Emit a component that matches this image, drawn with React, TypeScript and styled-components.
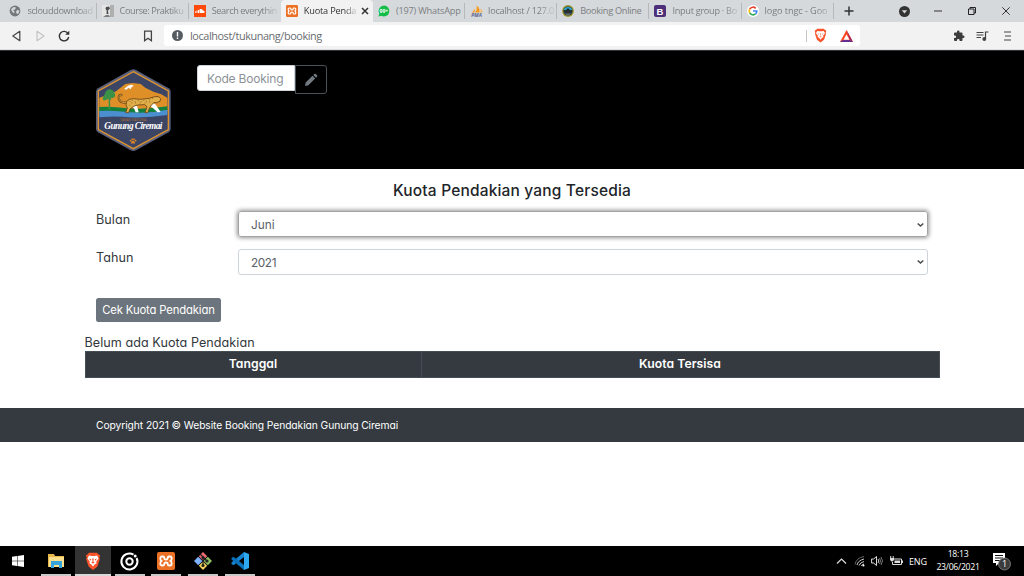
import React from "react";
import styled, { createGlobalStyle, css } from "styled-components";

const GlobalStyle = createGlobalStyle`
  * { box-sizing: border-box; }
  html, body { margin: 0; padding: 0; background: #fff; }
  body { width: 1024px; height: 576px; overflow: hidden; }
`;

const ui = `"Open Sans", "Noto Sans", sans-serif`;
const brand = `Inter, "Liberation Sans", sans-serif`;

const Screen = styled.div`
  width: 1024px;
  height: 576px;
  display: flex;
  flex-direction: column;
  background: #fff;
  svg { display: block; flex: none; overflow: visible; }
`;

/* Browser window */
const TabStrip = styled.div`
  height: 22px;
  flex: none;
  display: flex;
  align-items: stretch;
  padding-left: 4.4px;
  background: #d5d9dc;
  font: 9.2px/22px ${ui};
`;
const Tab = styled.div<{ $active?: boolean; $divider?: boolean }>`
  width: 92.15px;
  flex: none;
  display: flex;
  align-items: center;
  padding: 0 2px 0 5px;
  color: #7b7e81;
  ${(p) => p.$divider && css`background: linear-gradient(#b5b9bc, #b5b9bc) right center / 1px 16px no-repeat;`}
  ${(p) => p.$active && css`background: #f2f2f2; color: #333; border-radius: 4px 4px 0 0;`}
`;
const Favicon = styled.span`
  width: 12px;
  height: 12px;
  margin-right: 6px;
  flex: none;
`;
const TabTitle = styled.span<{ $ls?: number; $fade?: boolean }>`
  flex: 1;
  min-width: 0;
  white-space: nowrap;
  letter-spacing: ${(p) => p.$ls ?? -0.25}px;
  ${(p) => p.$fade && css`mask-image: linear-gradient(90deg, #000 76%, rgba(0, 0, 0, 0.25) 96%);`}
`;
const WindowControls = styled.div`
  flex: 1;
  display: flex;
  align-items: center;
  gap: 26px;
  padding-left: 10.4px;
  > :first-child { margin-right: 19px; }
  > :nth-child(2) { margin-right: -2px; }
`;
const Toolbar = styled.div`
  height: 28px;
  flex: none;
  display: flex;
  align-items: center;
  padding-left: 10px;
  background: #f2f2f2;
  border-bottom: 1px solid #dcdcdc;
`;
const NavIcons = styled.div`
  width: 154px;
  display: flex;
  align-items: center;
  gap: 12px;
  > :last-child { margin-left: 60px; }
`;
const AddressBar = styled.div`
  width: 696px;
  height: 21px;
  display: flex;
  align-items: center;
  padding: 0 7px 0 8px;
  border-radius: 3px;
  background: #fff;
  gap: 7px;
`;
const Url = styled.span`
  flex: 1;
  font: 10.9px/20px ${ui};
  letter-spacing: -0.42px;
  color: #6a6d70;
`;
const Rule = styled.i`
  width: 1px;
  height: 12px;
  background: #c4c4c4;
`;
const Extensions = styled.div`
  flex: 1;
  display: flex;
  justify-content: flex-end;
  align-items: center;
  gap: 11px;
  padding-right: 10px;
`;

/* Website */
const SiteHeader = styled.header`
  height: 119px;
  flex: none;
  display: flex;
  align-items: flex-start;
  padding: 14px 0 0 96px;
  background: #000;
  border-top: 1px solid #303438;
`;
const LogoBox = styled.div`
  width: 101px;
  padding-top: 4px;
`;
const BookingInput = styled.input`
  width: 98px;
  height: 26px;
  margin: 0;
  padding: 0 0 0 9px;
  border: 1px solid #ced4da;
  border-radius: 3px 0 0 3px;
  outline: 0;
  background: #fff;
  font: 400 12px ${brand};
  font-feature-settings: "cv11";
  letter-spacing: -0.2px;
  &::placeholder { color: #8d9297; opacity: 1; }
`;
const EditButton = styled.button`
  width: 32px;
  height: 29px;
  padding: 0;
  display: grid;
  place-items: center;
  background: #000;
  border: 1px solid #4b5258;
  border-radius: 0 3px 3px 0;
`;
const Main = styled.main`
  height: 239px;
  flex: none;
  width: 855px;
  margin: 0 auto;
  font-family: ${brand};
  font-feature-settings: "cv11";
  color: #212529;
`;
const Form = styled.form`
  padding: 11px 11.5px 0;
  height: 163px;
`;
const Title = styled.h1`
  margin: 0 0 10px;
  font: 500 15.5px/21px ${brand};
  letter-spacing: 0.17px;
  text-align: center;
`;
const Field = styled.div`
  display: flex;
  height: 26px;
  margin-bottom: 11.5px;
`;
const Label = styled.label`
  width: 142px;
  font-size: 12.6px;
  line-height: 18px;
  letter-spacing: 0.05px;
  color: #33383c;
`;
const Select = styled.div<{ $focus?: boolean }>`
  flex: 1;
  display: flex;
  align-items: center;
  justify-content: space-between;
  padding: 2px 3px 0 12px;
  border: 1px solid ${(p) => (p.$focus ? "#a4a4a4" : "#ced4da")};
  border-radius: 3px;
  font-size: 11.8px;
  letter-spacing: -0.4px;
  color: #5a6168;
  ${(p) => p.$focus && css`letter-spacing: 0; box-shadow: 0 0 4px 1px rgba(0, 0, 0, 0.42);`}
`;
const CheckButton = styled.button`
  display: block;
  width: 125px;
  height: 24px;
  margin-top: 23px;
  padding: 0;
  border: 0;
  border-radius: 2.5px;
  background: #6c757d;
  color: #fff;
  font: 400 11.3px/24px ${brand};
  font-feature-settings: "cv11";
  letter-spacing: -0.15px;
`;
const Message = styled.p`
  margin: 0;
  height: 19px;
  font-size: 12.6px;
  line-height: 21px;
  letter-spacing: 0.05px;
  color: #33383c;
`;
const QuotaHead = styled.div`
  display: grid;
  grid-template-columns: 335px 1fr;
  height: 27px;
  background: #343a40;
  border: 1px solid #454d55;
`;
const HeadCell = styled.div`
  text-align: center;
  font-weight: 600;
  font-size: 12.2px;
  line-height: 24px;
  letter-spacing: 0.05px;
  color: #fff;
  & + & { border-left: 1px solid #454d55; }
`;
const Footer = styled.footer`
  height: 34px;
  flex: none;
  padding-left: 96px;
  background: #343a40;
  font: 400 10.3px/34px ${brand};
  font-feature-settings: "cv11";
  letter-spacing: -0.09px;
  color: #fff;
`;
const Blank = styled.div`
  flex: 1;
`;

/* Desktop taskbar */
const Taskbar = styled.div`
  height: 30px;
  flex: none;
  display: flex;
  background: #000;
  color: #fff;
  font-family: ${ui};
`;
const Apps = styled.div`
  display: grid;
  grid-template-columns: 38px repeat(6, 36.7px);
  > :first-child { padding-right: 2px; }
`;
const AppSlot = styled.div<{ $state?: "open" | "active" }>`
  display: grid;
  place-items: center;
  ${(p) => p.$state && css`background: linear-gradient(#c9c9c9, #c9c9c9) center bottom / 30px 2px no-repeat;`}
  ${(p) => p.$state === "active" && css`background: linear-gradient(#d9d9d9, #d9d9d9) center bottom / 100% 2px no-repeat, #333;`}
`;
const Tray = styled.div`
  flex: 1;
  display: flex;
  justify-content: flex-end;
  align-items: center;
  gap: 6px;
  padding-right: 12px;
`;
const Lang = styled.span`
  width: 20px;
  font-size: 9px;
  letter-spacing: -0.2px;
`;
const Clock = styled.div`
  width: 46px;
  text-align: center;
  font-size: 8.7px;
  line-height: 13px;
  letter-spacing: -0.3px;
  white-space: nowrap;
`;

const Xampp = ({ s }: { s: number }) => (
  <svg width={s} height={s} viewBox="0 0 18 18">
    <rect width="18" height="18" rx="2" fill="#ec7124" />
    <path d="M5 4.500H6Q7.300 4.500 7.300 6 7.300 7.500 9 7.500 10.700 7.500 10.700 6 10.700 4.500 12 4.500H13Q14.700 4.500 14.700 6.500 14.700 8.300 13.500 9 14.700 9.700 14.700 11.500 14.700 13.500 13 13.500H12Q10.700 13.500 10.700 12 10.700 10.500 9 10.500 7.300 10.500 7.300 12 7.300 13.500 6 13.500H5Q3.300 13.500 3.300 11.500 3.300 9.700 4.500 9 3.300 8.300 3.300 6.500 3.300 4.500 5 4.500z" fill="none" stroke="#fff" strokeWidth="1.800" />
  </svg>
);
const Brave = ({ s, pale }: { s: number; pale?: boolean }) => (
  <svg width={s} height={s * 1.15} viewBox="0 0 20 23">
    <path d="M5 1h10l2 2 2 1-1 3 .5 2-3 9-5.500 4.500L4.500 18l-3-9L2 7 1 4l2-1z" fill="#fb542b" />
    <path d="M5 4.500l3 .5h4l3-.5 2 3.500-3 4 .5 2-2.500 1.500L10 18l-2-2.500L5.500 14l.5-2-3-4z" fill="#fff" />
    <path d="M5 8l3 1-1 2zM15 8l-3 1 1 2zM9 8h2l-.5 4 1.500 1.500-2 1-2-1L9.500 12z" fill={pale ? "#f9a58f" : "#fb542b"} />
  </svg>
);

const Globe = () => (
  <svg width="12" height="12" viewBox="0 0 12 12">
    <circle cx="6" cy="6" r="5.400" fill="#74787b" />
    <path d="M2 4.500L4.500 2l2.500.5-1 2-2 .5 1.500 1.500L5 8.500l-2-2zM8 5l2.500.5-1 3-1.500.5-1-2z" fill="#d5d9dc" />
  </svg>
);
const CourseIcon = () => (
  <svg width="12" height="12" viewBox="0 0 12 12">
    <rect width="12" height="12" fill="#e5e5e3" />
    <path d="M8 0h4v12H8z" fill="#aeb0b0" />
    <path d="M4 2l3-.5 1 2-2 2 .5 3.500H4.500l.2-3.500L3.500 4z" fill="#4a4e50" />
    <path d="M1 12l3-2h3l1 2z" fill="#7b7e80" />
  </svg>
);
const SoundCloud = () => (
  <svg width="12" height="12" viewBox="0 0 12 12">
    <rect width="12" height="12" fill="#ff4a0a" />
    <path d="M5.500 8V4.300c2-1 3.300.2 3.500 1.500C11.200 5.600 11.200 8 9.500 8zM4 5h1v3H4zM2.500 5.500h1V8h-1zM1.200 6.200h.8v1.500h-.8z" fill="#fff" />
  </svg>
);
const WhatsApp = () => (
  <svg width="12" height="12" viewBox="0 0 12 12">
    <path d="M6 .6a5.400 5.400 0 1 1-2.700 10.100L.5 11.500l.8-2.800A5.400 5.400 0 0 1 6 .6z" fill="#12bd4a" />
    <text x="5.900" y="7.900" fontSize="5" fontWeight="700" fontFamily="Open Sans" fill="#fff" textAnchor="middle">99+</text>
  </svg>
);
const Pma = () => (
  <svg width="13" height="12" viewBox="0 0 13 12">
    <path d="M1.500 7.500C3 7 4 5.500 4 3.500c1 1.200 1 3 .5 4zM5 7.500C7 5 7 3 6.500.5c2.500 1.500 3.500 4 3 7z" fill="#f79a1c" />
    <path d="M10 7.500c.8-1.200.8-2.500.5-4 1.200 1 2 2.500 2 4z" fill="#f7b65a" />
    <text x="6.500" y="11.800" fontSize="5" fontWeight="700" fontStyle="italic" fontFamily="Open Sans" fill="#5d6390" textAnchor="middle">PMA</text>
  </svg>
);
const ParkIcon = () => (
  <svg width="12" height="12" viewBox="0 0 12 12">
    <circle cx="6" cy="6" r="5.900" fill="#9a9632" />
    <circle cx="6" cy="6" r="4.600" fill="#25343b" />
    <path d="M1.800 5A4.500 4.500 0 0 1 10.200 5z" fill="#28a7d4" />
    <path d="M2.500 6.500L6 3l3.500 3.500z" fill="#262c2d" />
    <path d="M2.500 8.500h7L6 10.800z" fill="#657071" />
  </svg>
);
const Bootstrap = () => (
  <svg width="12" height="12" viewBox="0 0 12 12">
    <rect width="12" height="12" rx="2" fill="#4c2f78" />
    <text x="6" y="9.500" fontSize="9.500" fontWeight="700" fontFamily="Liberation Sans" fill="#fff" textAnchor="middle">B</text>
  </svg>
);
const Google = () => (
  <svg width="12" height="12" viewBox="0 0 12 12">
    <circle cx="6" cy="6" r="6" fill="#fff" />
    <g fill="none" strokeWidth="1.700">
      <path d="M8.700 3.300A3.800 3.800 0 0 0 2.700 4.200" stroke="#ea4335" />
      <path d="M2.700 4.200a3.800 3.800 0 0 0 0 3.600" stroke="#fbbc05" />
      <path d="M2.700 7.800a3.800 3.800 0 0 0 5.800 1.100" stroke="#34a853" />
      <path d="M8.500 8.900A3.800 3.800 0 0 0 9.800 6H6" stroke="#4285f4" />
    </g>
  </svg>
);

const tabs = [
  { title: "sclouddownload", icon: <Globe />, divider: true, fade: true, ls: -0.35 },
  { title: "Course: Praktiku", icon: <CourseIcon />, divider: true, fade: true, ls: -0.4 },
  { title: "Search everythin", icon: <SoundCloud />, fade: true, ls: -0.4 },
  { title: "Kuota Penda", icon: <Xampp s={12} />, active: true, fade: true, ls: -0.2 },
  { title: "(197) WhatsApp", icon: <WhatsApp />, divider: true, ls: -0.2 },
  { title: "localhost / 127.0", icon: <Pma />, divider: true, fade: true },
  { title: "Booking Online", icon: <ParkIcon />, divider: true, ls: -0.3 },
  { title: "Input group · Bo", icon: <Bootstrap />, divider: true, fade: true, ls: -0.3 },
  { title: "logo tngc - Goo", icon: <Google />, divider: true, fade: true, ls: -0.1 },
];

const Chevron = () => (
  <svg width="7" height="5" viewBox="0 0 7 5">
    <path d="M.7.500l2.800 2.600L6.300.5" fill="none" stroke="#474c50" strokeWidth="1.500" />
  </svg>
);

const Logo = () => (
  <svg width="75" height="82" viewBox="18 20 225 246">
    <defs>
      <clipPath id="hex"><path d="M130 30L233 88v112l-103 58L27 200V88z" /></clipPath>
    </defs>
    <path d="M130 21q4 0 8 2l98 55q6 4 6 10v112q0 6-6 10l-98 54q-8 4-16 0l-98-54q-6-4-6-10V88q0-6 6-10l98-55q4-2 8-2z" fill="#59607c" />
    <path d="M130 28L235 86v116l-105 57L25 202V86z" fill="#3c4563" stroke="#dd922f" strokeWidth="4" />
    <g clipPath="url(#hex)">
      <path d="M28 106l22-7 28-12 28-22 22-3 24 3 14 11 24 12 24 8 20 12v42H28z" fill="#df8f28" />
      <path d="M102 80l12-10 10-3 8 4-7 3-3 7-7-5-5 6z" fill="#fff" />
      <path d="M28 134q42-2 84 4 60 4 121-6v15q-60 12-118 8-50-6-87-4z" fill="#15803c" />
      <path d="M28 146q48-2 92 4 60 4 113-8v16q-60 9-115 7-44-5-90 0z" fill="#4c8fd0" />
    </g>
    <path d="M56 112h4l1 28h5l-14 1 4-3zM38 108l6-12 4-10 10-6 10 4 6 8 2 10-8 6-6-1 2 6-12-2-10 4-4-4z" fill="#3b9247" />
    <path d="M114 119q-10 4-20 0-10-6-7-17 2-5 7-4" fill="none" stroke="#6a4518" strokeWidth="7" strokeLinecap="round" />
    <path d="M114 119q-10 4-20 0-10-6-7-17 2-5 7-4" fill="none" stroke="#d9a33e" strokeWidth="3" strokeLinecap="round" />
    <path d="M183 120L196 126 212 149 203 150 186 135 172 128zM122 128L141 131 146 150 137 150 132 138z" fill="#fff" />
    <path d="M110 117Q116 109 130 109L152 111 178 108 194 103 206 103 212 109 210 117 200 121 191 121 184 129 179 136 173 151 165 151 171 133 164 127 142 128 131 132 120 140 116 151 107 151 112 137 108 128z" fill="#e0af4a" stroke="#6a4518" strokeWidth="2.600" strokeLinejoin="round" />
    <path d="M118 117h3m5-3h3m5 4h3m6-3h3m6 3h3m5-4h3m5 3h3m6-4h3m-56 9h3m8 0h3m11 0h3m12 0h3m10-3h3m-62 10h3m65-21h3" stroke="#805620" strokeWidth="2" />
    <text x="131" y="175" fontSize="9.500" fontFamily="Open Sans" fill="#a66b36" textAnchor="middle">TAMAN NASIONAL</text>
    <text x="130" y="200" fontSize="28" fontWeight="700" fontStyle="italic" textLength="174" fontFamily="Liberation Serif" fill="#fff" textAnchor="middle">Gunung Ciremai</text>
    <g fill="#dd8428">
      <path d="M123 244q0-9 6-9t6 9q-6-2-12 0z" />
      <circle cx="122" cy="235" r="2.800" /><circle cx="127" cy="231" r="2.800" />
      <circle cx="132" cy="231" r="2.800" /><circle cx="136.500" cy="235" r="2.800" />
    </g>
  </svg>
);

export default function App() {
  return (
    <Screen>
      <GlobalStyle />
      <TabStrip>
        {tabs.map((t) => (
          <Tab key={t.title} $active={t.active} $divider={t.divider}>
            <Favicon>{t.icon}</Favicon>
            <TabTitle $ls={t.ls} $fade={t.fade}>{t.title}</TabTitle>
            {t.active && (
              <svg width="14" height="8" viewBox="0 0 14 8"><path d="M5 1l6 6m0-6L5 7" stroke="#333" strokeWidth="1.500" /></svg>
            )}
          </Tab>
        ))}
        <WindowControls>
          <svg width="10" height="10" viewBox="0 0 10 10"><path d="M5 .5v9M.5 5h9" stroke="#303336" strokeWidth="1.500" /></svg>
          <svg width="11" height="11" viewBox="0 0 11 11"><circle cx="5.500" cy="5.500" r="5.500" fill="#333" /><path d="M2.800 4.200h5.400L5.500 7.500z" fill="#d5d9dc" /></svg>
          <svg width="8" height="2" viewBox="0 0 8 2"><path d="M0 1h8" stroke="#333" /></svg>
          <svg width="8" height="8" viewBox="0 0 8 8"><path d="M.5 2h5.500v5.500H.5zM2 2V.5h5.500V6H6" fill="none" stroke="#222" /></svg>
          <svg width="8" height="8" viewBox="0 0 8 8"><path d="M.3.300l7.400 7.400m0-7.400L.3 7.700" stroke="#333" /></svg>
        </WindowControls>
      </TabStrip>
      <Toolbar>
        <NavIcons>
          <svg width="12" height="12" viewBox="0 0 12 12"><path d="M9.800 1.300v9.400L2.800 6z" fill="none" stroke="#444" strokeWidth="1.200" strokeLinejoin="round" /></svg>
          <svg width="12" height="12" viewBox="0 0 12 12"><path d="M3 1.300v9.400L10 6z" fill="none" stroke="#c2c2c2" strokeWidth="1.100" strokeLinejoin="round" /></svg>
          <svg width="12" height="12" viewBox="0 0 12 12"><path d="M10 3.500A4.700 4.700 0 1 0 10.700 7" fill="none" stroke="#333" strokeWidth="1.400" /><path d="M11.300.8v4H7.200z" fill="#333" /></svg>
          <svg width="12" height="12" viewBox="0 0 12 12"><path d="M2.600 1.200h6.800v9.600L6 8.200l-3.400 2.600z" fill="none" stroke="#444" strokeWidth="1.300" /></svg>
        </NavIcons>
        <AddressBar>
          <svg width="11" height="11" viewBox="0 0 11 11"><circle cx="5.500" cy="5.500" r="5.500" fill="#575c63" /><path d="M5.500 2v4.500M5.500 7.600v1.500" stroke="#fff" strokeWidth="1.400" /></svg>
          <Url>localhost/tukunang/booking</Url>
          <Rule />
          <Brave s={13} pale />
          <svg width="19" height="12" viewBox="-6 0 19 12">
            <path d="M6.500 0L13 12H0z" fill="#ff4724" /><path d="M6.500 0L13 12l-3-2z" fill="#9e1f63" /><path d="M13 12H0l3-2h7z" fill="#662d91" /><path d="M6.500 4.500l3 5.300h-6z" fill="#fff" />
          </svg>
        </AddressBar>
        <Extensions>
          <svg width="12" height="12" viewBox="0 0 24 24"><path d="M20.500 11H19V7a2 2 0 0 0-2-2h-4V3.500a2.500 2.500 0 0 0-5 0V5H4a2 2 0 0 0-2 2v3.800h1.500a2.700 2.700 0 0 1 0 5.400H2V20a2 2 0 0 0 2 2h3.800v-1.500a2.700 2.700 0 0 1 5.400 0V22H17a2 2 0 0 0 2-2v-4h1.500a2.500 2.500 0 0 0 0-5z" fill="#3c3c3c" /></svg>
          <svg width="13" height="12" viewBox="0 0 13 12"><path d="M.5 2.500h7M.5 5h7M.5 7.500h4.500M9.500 9V2H12.500" stroke="#444" strokeWidth="1.200" fill="none" /><circle cx="8.300" cy="9" r="1.900" fill="#444" /></svg>
          <svg width="14" height="12" viewBox="0 0 14 12"><path d="M4 2h7M5 6h6M4 10h7" stroke="#444" strokeWidth="1.200" /></svg>
        </Extensions>
      </Toolbar>

      <SiteHeader>
        <LogoBox><Logo /></LogoBox>
        <BookingInput placeholder="Kode Booking" />
        <EditButton>
          <svg width="14" height="14" viewBox="0 0 14 14"><path d="M1 13l.7-3.400L8.500 2.800l2.700 2.700-6.800 6.800zM9.300 2l1-1q.8-.6 1.500 0L13 2.200q.6.700 0 1.500l-1 1z" fill="#737b82" /></svg>
        </EditButton>
      </SiteHeader>

      <Main>
        <Form>
          <Title>Kuota Pendakian yang Tersedia</Title>
          <Field><Label>Bulan</Label><Select $focus>Juni<Chevron /></Select></Field>
          <Field><Label>Tahun</Label><Select>2021<Chevron /></Select></Field>
          <CheckButton type="button">Cek Kuota Pendakian</CheckButton>
        </Form>
        <Message>Belum ada Kuota Pendakian</Message>
        <QuotaHead><HeadCell>Tanggal</HeadCell><HeadCell>Kuota Tersisa</HeadCell></QuotaHead>
      </Main>
      <Footer>Copyright 2021 © Website Booking Pendakian Gunung Ciremai</Footer>
      <Blank />

      <Taskbar>
        <Apps>
          <AppSlot>
            <svg width="12" height="12" viewBox="0 0 12 12"><path d="M0 1.700l5-.7v4.700H0zM5.500.9L12 0v5.700H5.500zM0 6.300h5V11l-5-.7zM5.500 6.300H12V12l-6.500-.9z" fill="#fff" /></svg>
          </AppSlot>
          <AppSlot $state="open">
            <svg width="17" height="14" viewBox="0 0 17 14"><path d="M0 0h6l1 2h9v11H0z" fill="#e8b84a" /><path d="M1 3h15v10H1z" fill="#fbdf8a" /><path d="M3 7h11v7h-3v-3H6v3H3z" fill="#35a4dc" /></svg>
          </AppSlot>
          <AppSlot $state="active"><Brave s={16} /></AppSlot>
          <AppSlot $state="open">
            <svg width="19" height="19" viewBox="0 0 19 19"><path d="M13.500 2.600A8 8 0 1 0 16.600 6" fill="none" stroke="#fff" strokeWidth="2" /><circle cx="9.500" cy="9.500" r="3.200" fill="none" stroke="#fff" strokeWidth="2" /><circle cx="15.200" cy="4" r="1.500" fill="#fff" /></svg>
          </AppSlot>
          <AppSlot $state="open"><Xampp s={18} /></AppSlot>
          <AppSlot $state="open">
            <svg width="18" height="18" viewBox="0 0 18 18"><path d="M9 0l4.200 4.200L9 8.400 4.800 4.200z" fill="#ee6b72" /><path d="M4.200 4.800L8.400 9l-4.200 4.200L0 9z" fill="#80b3ff" /><path d="M13.800 4.800L18 9l-4.200 4.200L9.600 9z" fill="#8fc465" /><path d="M9 9.600l4.200 4.200L9 18l-4.200-4.200z" fill="#f3d25a" /><path d="M6 2l6.500 6.500M9 5v9" stroke="#222" strokeWidth="1.300" /><circle cx="9" cy="5.500" r="1.500" fill="#222" /><circle cx="9" cy="13.500" r="1.600" fill="#222" /><circle cx="13" cy="9" r="1.600" fill="#222" /></svg>
          </AppSlot>
          <AppSlot $state="open">
            <svg width="18" height="18" viewBox="0 0 18 18"><path d="M13 0l5 2v14l-5 2z" fill="#2fa8f2" /><path d="M13 0v5L2.500 13.300.5 12v-1.500z" fill="#1583cf" /><path d="M13 18v-5L2.500 4.700.5 6v1.500z" fill="#0871bb" /></svg>
          </AppSlot>
        </Apps>
        <Tray>
          <svg width="11" height="8" viewBox="0 0 11 8"><path d="M1 6.500l4.500-4.500L10 6.500" fill="none" stroke="#ddd" strokeWidth="1.200" /></svg>
          <svg width="12" height="12" viewBox="-1 0 12 12"><g fill="none" strokeWidth="1"><path d="M1 9.500Q2 3 10 1.500" stroke="#666" /><path d="M3 10Q4 5.500 10 4M5 10.500Q6 7.500 10 6.500" stroke="#ccc" /><path d="M7.500 11Q8 9.500 10 9" stroke="#eee" /></g><circle cx="9.500" cy="10.500" r="1" fill="#fff" /></svg>
          <svg width="12" height="12" viewBox="0 0 12 12"><path d="M.6 4h2L5.500 1.500v9L2.600 8h-2z" fill="none" stroke="#ddd" /><path d="M7 4q1.500 2 0 4" fill="none" stroke="#ccc" /><path d="M8.500 3q2 3 0 6M10 2q3 4 0 8" fill="none" stroke="#777" /></svg>
          <svg width="14" height="12" viewBox="0 0 14 12"><path d="M4 4h8.500v5.500H3.500V7" fill="none" stroke="#ddd" /><path d="M5.500 5.500h5.500v2.500H5.500zM1 3h4v2L3.500 6.500h-1L1 5z" fill="#ddd" /><path d="M1.700 1v2M4.200 1v2M13.500 5.500v2.500" stroke="#ddd" /></svg>
          <Lang>ENG</Lang>
          <Clock>18:13<br />23/06/2021</Clock>
          <svg width="25" height="20" viewBox="-5 0 25 20">
            <path d="M1 2h12v10H7l-3 3v-3H1z" fill="#fff" /><path d="M3 4.500h8M3 7h8M3 9.500h5" stroke="#111" />
            <circle cx="12.500" cy="13" r="6" fill="#3b3b3b" stroke="#888" strokeWidth=".8" />
            <text x="12.500" y="16.300" fontSize="9" fontFamily="Open Sans" fill="#fff" textAnchor="middle">1</text>
          </svg>
        </Tray>
      </Taskbar>
    </Screen>
  );
}
